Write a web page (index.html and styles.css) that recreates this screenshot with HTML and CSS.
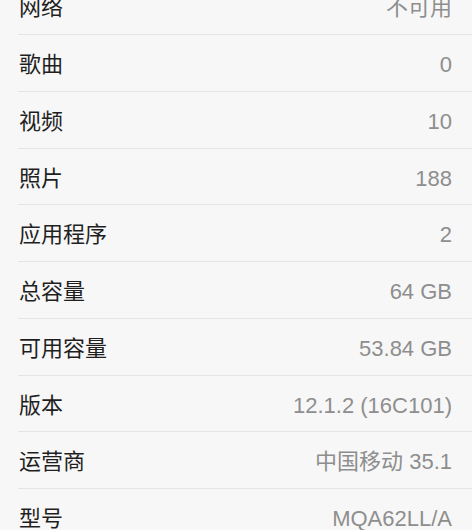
FILE: index.html
```html
<!DOCTYPE html>
<html lang="zh-CN">
<head>
  <meta charset="UTF-8" />
  <meta name="viewport" content="width=device-width, initial-scale=1.0" />
  <title>关于本机</title>
  <link rel="stylesheet" href="styles.css">
</head>
<body>
  <div class="info-list">
    <div class="row"><div class="row-inner"><span class="label">网络</span><span class="value">不可用</span></div></div>
    <div class="row"><div class="row-inner"><span class="label">歌曲</span><span class="value">0</span></div></div>
    <div class="row"><div class="row-inner"><span class="label">视频</span><span class="value">10</span></div></div>
    <div class="row"><div class="row-inner"><span class="label">照片</span><span class="value">188</span></div></div>
    <div class="row"><div class="row-inner"><span class="label">应用程序</span><span class="value">2</span></div></div>
    <div class="row"><div class="row-inner"><span class="label">总容量</span><span class="value">64 GB</span></div></div>
    <div class="row"><div class="row-inner"><span class="label">可用容量</span><span class="value">53.84 GB</span></div></div>
    <div class="row"><div class="row-inner"><span class="label">版本</span><span class="value">12.1.2 (16C101)</span></div></div>
    <div class="row"><div class="row-inner"><span class="label">运营商</span><span class="value">中国移动 35.1</span></div></div>
    <div class="row"><div class="row-inner"><span class="label">型号</span><span class="value">MQA62LL/A</span></div></div>
  </div>
</body>
</html>
```

FILE: styles.css
```css
body {
  margin: 0;
  background: #f7f7f7;
  font-family: "Liberation Sans", "Noto Sans CJK SC", sans-serif;
  font-size: 22px;
  overflow: hidden;
}
.info-list {
  margin-top: -21.75px;
}
.row {
  padding-left: 18px;
}
.row-inner {
  box-sizing: border-box;
  height: 56.75px;
  display: flex;
  align-items: baseline;
  justify-content: space-between;
  padding: 4px 20px 0 1px;
  line-height: 52px;
  border-bottom: 1.5px solid #e4e4e4;
}
.label {
  color: #1f1f1f;
}
.value {
  color: #8e8e8e;
}
```
